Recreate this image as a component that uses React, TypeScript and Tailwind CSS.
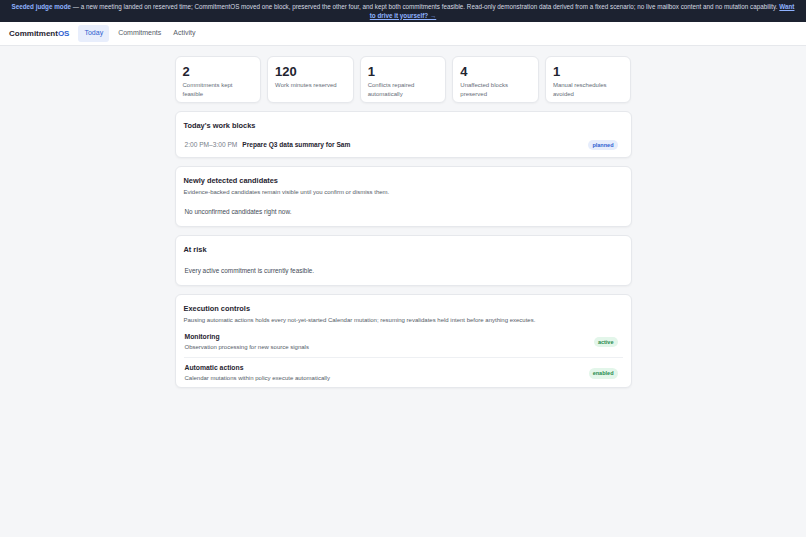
export default function App() {
  const stats = [
    ["2", "Commitments kept feasible"],
    ["120", "Work minutes reserved"],
    ["1", "Conflicts repaired automatically"],
    ["4", "Unaffected blocks preserved"],
    ["1", "Manual reschedules avoided"],
  ];
  const card = "bg-white rounded-[6px] border border-[#e6e8ec] shadow-[0_1px_2px_rgba(0,0,0,0.04)]";
  return (
    <div className="min-h-[537px] bg-[#f5f6f8] text-[#1f2430]" style={{ fontFamily: "'Liberation Sans', Arial, sans-serif" }}>
      <div className="bg-[#1c2230] text-[#d6dae2] text-[6.3px] leading-[8.5px] text-center px-[8px] pt-[3px] pb-[3px] h-[22px]">
        <span className="text-[#8fb2ff] font-bold">Seeded judge mode</span> — a new meeting landed on reserved time; CommitmentOS moved one block, preserved the other four, and kept both commitments feasible. Read-only demonstration data derived from a fixed scenario; no live mailbox content and no mutation capability.{" "}
        <span className="text-[#8fb2ff] font-bold underline">Want to drive it yourself? →</span>
      </div>
      <div className="bg-white border-b border-[#e6e8ec] h-[24px] flex items-center px-[9px] gap-[6px]">
        <div className="text-[8px] font-bold mr-[3px]">Commitment<span className="text-[#2f5fd0]">OS</span></div>
        <div className="text-[7px] px-[6px] py-[3px] rounded-[3px] bg-[#e8eefc] text-[#2f5fd0]">Today</div>
        <div className="text-[7px] px-[3px] text-[#555c68]">Commitments</div>
        <div className="text-[7px] px-[3px] text-[#555c68]">Activity</div>
      </div>
      <div className="w-[457px] mx-auto pt-[10px] flex flex-col gap-[8px]">
        <div className="grid grid-cols-5 gap-[6px]">
          {stats.map(([n, l]) => (
            <div key={l} className={`${card} h-[47px] px-[7px] pt-[8px]`}>
              <div className="text-[13px] font-bold leading-[14px]">{n}</div>
              <div className="text-[6px] leading-[8.5px] text-[#666d78] mt-[2px]">{l}</div>
            </div>
          ))}
        </div>
        <div className={`${card} h-[47px] px-[8px] pt-[8px]`}>
          <div className="text-[7.4px] font-bold">Today's work blocks</div>
          <div className="flex items-center mt-[9px] px-[1px]">
            <span className="text-[6.6px] text-[#777e88]">2:00 PM–3:00 PM</span>
            <span className="text-[6.6px] font-bold ml-[5px]">Prepare Q3 data summary for Sam</span>
            <span className="ml-auto text-[5.5px] px-[4px] py-[1px] rounded-full bg-[#e6edfc] text-[#2f5fd0] font-bold mr-[4px]">planned</span>
          </div>
        </div>
        <div className={`${card} h-[61px] px-[8px] pt-[8px]`}>
          <div className="text-[7.4px] font-bold">Newly detected candidates</div>
          <div className="text-[6px] text-[#555c68] mt-[2px]">Evidence-backed candidates remain visible until you confirm or dismiss them.</div>
          <div className="text-[6.4px] text-[#444b56] mt-[10px] px-[1px]">No unconfirmed candidates right now.</div>
        </div>
        <div className={`${card} h-[51px] px-[8px] pt-[8px]`}>
          <div className="text-[7.4px] font-bold">At risk</div>
          <div className="text-[6.4px] text-[#444b56] mt-[11px] px-[1px]">Every active commitment is currently feasible.</div>
        </div>
        <div className={`${card} h-[94px] px-[8px] pt-[8px]`}>
          <div className="text-[7.4px] font-bold">Execution controls</div>
          <div className="text-[6px] text-[#555c68] mt-[2px]">Pausing automatic actions holds every not-yet-started Calendar mutation; resuming revalidates held intent before anything executes.</div>
          <div className="flex items-center mt-[7px] pb-[5px] border-b border-[#eef0f3] px-[1px]">
            <div>
              <div className="text-[6.8px] font-bold">Monitoring</div>
              <div className="text-[6px] text-[#555c68] mt-[1px]">Observation processing for new source signals</div>
            </div>
            <span className="ml-auto text-[5.5px] px-[4px] py-[1px] rounded-full bg-[#e3f6ea] text-[#1f8a4c] font-bold mr-[4px]">active</span>
          </div>
          <div className="flex items-center mt-[5px] px-[1px]">
            <div>
              <div className="text-[6.8px] font-bold">Automatic actions</div>
              <div className="text-[6px] text-[#555c68] mt-[1px]">Calendar mutations within policy execute automatically</div>
            </div>
            <span className="ml-auto text-[5.5px] px-[4px] py-[1px] rounded-full bg-[#e3f6ea] text-[#1f8a4c] font-bold mr-[4px]">enabled</span>
          </div>
        </div>
      </div>
    </div>
  );
}
